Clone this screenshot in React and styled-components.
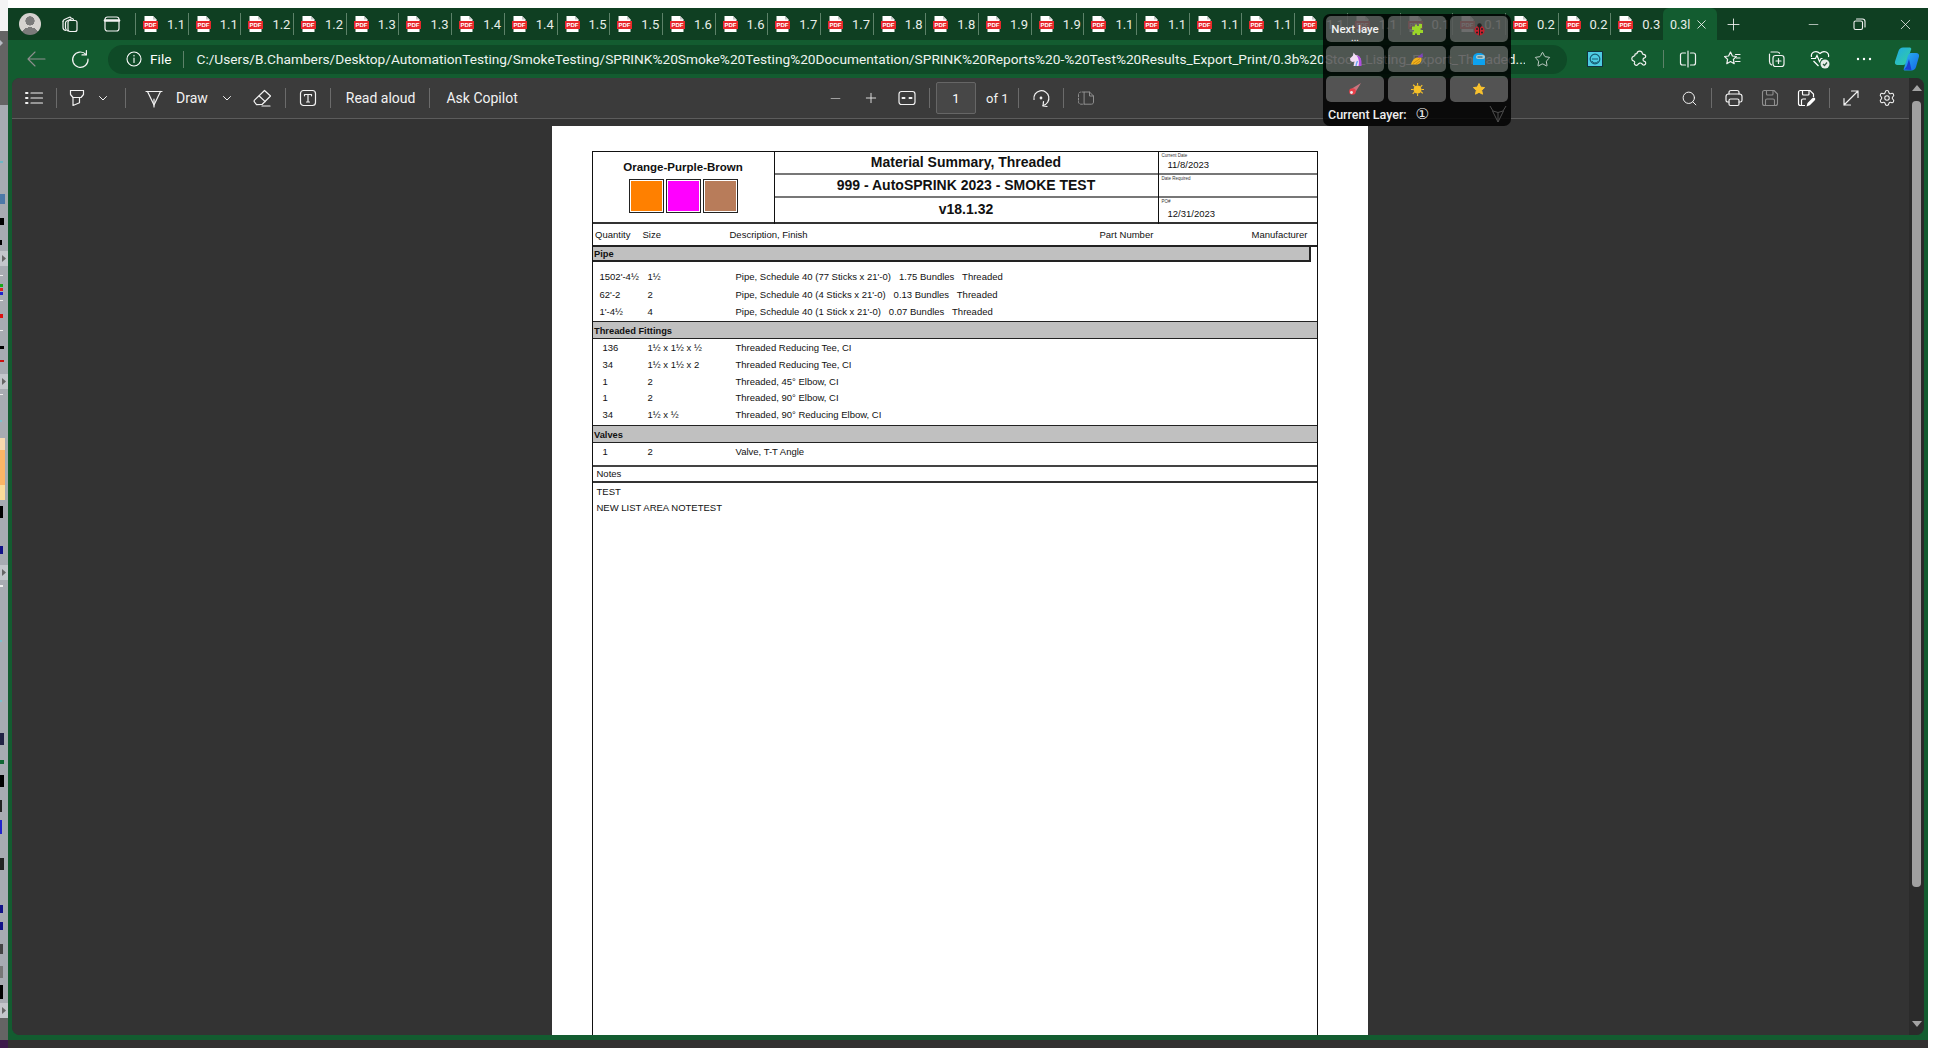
import styled, { createGlobalStyle } from "styled-components";
import { Settings, Star, Search, Minus, Plus, X } from "lucide-react";

const GlobalStyle = createGlobalStyle`
  html, body { margin: 0; padding: 0; background: #fff; overflow: hidden; }
  * { box-sizing: border-box; }
`;

const UI_FONT = `"Roboto", "Noto Sans", sans-serif`;
const DOC_FONT = `"Liberation Sans", Arial, sans-serif`;

const TABS = [
  "1.1", "1.1", "1.2", "1.2", "1.3", "1.3", "1.4", "1.4", "1.5", "1.5",
  "1.6", "1.6", "1.7", "1.7", "1.8", "1.8", "1.9", "1.9", "1.1", "1.1",
  "1.1", "1.1", "1.1", "1.1", "0.1", "0.1", "0.2", "0.2", "0.3",
];

const URL_TEXT =
  "C:/Users/B.Chambers/Desktop/AutomationTesting/SmokeTesting/SPRINK%20Smoke%20Testing%20Documentation/SPRINK%20Reports%20-%20Test%20Results_Export_Print/0.3b%20Stock_Listing_Export_Threaded...";

const PIPE = [
  ["1502'-4½", "1½", "Pipe, Schedule 40 (77 Sticks x 21'-0)   1.75 Bundles   Threaded"],
  ["62'-2", "2", "Pipe, Schedule 40 (4 Sticks x 21'-0)   0.13 Bundles   Threaded"],
  ["1'-4½", "4", "Pipe, Schedule 40 (1 Stick x 21'-0)   0.07 Bundles   Threaded"],
];

const FITTINGS = [
  ["136", "1½ x 1½ x ½", "Threaded Reducing Tee, CI"],
  ["34", "1½ x 1½ x 2", "Threaded Reducing Tee, CI"],
  ["1", "2", "Threaded, 45° Elbow, CI"],
  ["1", "2", "Threaded, 90° Elbow, CI"],
  ["34", "1½ x ½", "Threaded, 90° Reducing Elbow, CI"],
];

const SLIVER_MARKS = [
  [0, 161, 3, 2, "#6fb6c4"], [0, 194, 5, 10, "#4d79a8"], [0, 218, 4, 7, "#000"],
  [0, 240, 2, 5, "#000"], [0, 275, 3, 1, "#eee"], [0, 284, 3, 3, "#19a81c"],
  [0, 288, 3, 3, "#d22"], [0, 292, 3, 3, "#22c"], [0, 300, 3, 1, "#eee"],
  [0, 314, 3, 4, "#d11"], [0, 330, 3, 1, "#eee"], [0, 346, 4, 3, "#000"],
  [0, 360, 4, 2, "#c11"], [0, 394, 3, 1, "#eee"], [0, 420, 2, 2, "#7fc0cc"],
  [0, 506, 3, 12, "#000"], [0, 546, 3, 8, "#118"], [0, 585, 3, 2, "#eee"],
  [0, 640, 2, 2, "#7fc0cc"], [0, 700, 2, 2, "#7fc0cc"], [0, 733, 4, 12, "#224"],
  [0, 760, 4, 4, "#163"], [0, 775, 4, 12, "#000"], [0, 800, 2, 12, "#222"],
  [0, 820, 2, 14, "#22c"], [0, 858, 4, 12, "#222"], [0, 905, 3, 8, "#118"],
  [0, 922, 3, 8, "#118"], [0, 944, 3, 10, "#444"], [0, 966, 3, 12, "#777"],
  [0, 985, 3, 14, "#000"],
];

const SLIVER_HANDLES = [251, 374, 565, 1003];

export default function App() {
  return (
    <Screen>
      <GlobalStyle />
      <Upper>
        <Sliver />
        <Win>
          <TabBar>
            <AvatarSlot>
              <Avatar />
            </AvatarSlot>
            <Slot $w={36}><WorkspacesIcon /></Slot>
            <Slot $w={47}><TabActionsIcon /></Slot>
            {TABS.map((title, i) => (
              <Tab key={i}>
                <PdfIcon />
                <TabTitle>{title}</TabTitle>
              </Tab>
            ))}
            <ActiveTab>
              <ActiveTitle>0.3l</ActiveTitle>
              <X size={15} strokeWidth={1.3} />
            </ActiveTab>
            <Slot $w={34}><Plus size={19} strokeWidth={1.1} /></Slot>
            <Spacer />
            <Slot $w={46}><Minus size={15} strokeWidth={1.1} /></Slot>
            <Slot $w={46}><RestoreIcon /></Slot>
            <Slot $w={46}><X size={17} strokeWidth={1.1} /></Slot>
          </TabBar>

          <NavBar>
            <Slot $w={56} $dim><BackIcon /></Slot>
            <Slot $w={32}><RefreshIcon /></Slot>
            <AddressPill>
              <InfoIcon />
              <FileLabel>File</FileLabel>
              <PillDivider />
              <UrlText>{URL_TEXT}</UrlText>
              <Slot $w={34}><Star size={17} strokeWidth={1.1} /></Slot>
            </AddressPill>
            <Slot $w={44} $ml={6}><ExtensionIcon /></Slot>
            <Slot $w={44}><PuzzleIcon /></Slot>
            <NavDivider />
            <Slot $w={44}><SplitIcon /></Slot>
            <Slot $w={44}><FavoritesIcon /></Slot>
            <Slot $w={44}><CollectionsIcon /></Slot>
            <Slot $w={44}><HealthIcon /></Slot>
            <Slot $w={44}><DotsIcon /></Slot>
            <Slot $w={42}><CopilotIcon /></Slot>
          </NavBar>

          <Viewer>
            <ViewerMain>
              <Toolbar>
                <LeftTools>
                  <Slot $w={44}><ListIcon /></Slot>
                  <ToolSep />
                  <Slot $w={40}><HighlightIcon /></Slot>
                  <Slot $w={12}><ChevronIcon /></Slot>
                  <ToolSep $ml={16} />
                  <Slot $w={44} $ml={6}><DrawIcon /></Slot>
                  <ToolText>Draw</ToolText>
                  <Slot $w={12} $ml={13}><ChevronIcon /></Slot>
                  <Slot $w={44} $ml={8}><EraserIcon /></Slot>
                  <ToolSep />
                  <Slot $w={44}><TextBoxIcon /></Slot>
                  <ToolSep />
                  <ToolText $ml={15}>Read aloud</ToolText>
                  <ToolSep $ml={14} />
                  <ToolText $ml={16}>Ask Copilot</ToolText>
                </LeftTools>
                <CenterTools>
                  <Slot $w={36} $ml={12} $soft><Minus size={15} strokeWidth={1.3} /></Slot>
                  <Slot $w={35}><Plus size={16} strokeWidth={1.3} /></Slot>
                  <Slot $w={38}><FitIcon /></Slot>
                  <ToolSep $ml={3} />
                  <PageBox>1</PageBox>
                  <OfText>of 1</OfText>
                  <ToolSep />
                  <Slot $w={44}><RotateIcon /></Slot>
                  <ToolSep />
                  <Slot $w={44} $dim><TwoPageIcon /></Slot>
                </CenterTools>
                <RightTools>
                  <Slot $w={44}><Search size={17} strokeWidth={1.4} /></Slot>
                  <ToolSep />
                  <Slot $w={44}><PrintIcon /></Slot>
                  <Slot $w={27} $dim><SaveIcon /></Slot>
                  <Slot $w={46}><SaveAsIcon /></Slot>
                  <ToolSep />
                  <Slot $w={42}><ExpandIcon /></Slot>
                  <Slot $w={30}><Settings size={18} strokeWidth={1.4} /></Slot>
                </RightTools>
              </Toolbar>

              <Canvas>
                <Page>
                  <Sheet>
                    <Header>
                      <ColorCell>
                        <ColorName>Orange-Purple-Brown</ColorName>
                        <Swatches>
                          <Swatch $c="#ff8000" />
                          <Swatch $c="#ff00ff" />
                          <Swatch $c="#b87c5a" />
                        </Swatches>
                      </ColorCell>
                      <TitleCell>
                        <TitleRow $h={23}>Material Summary, Threaded</TitleRow>
                        <TitleRow $h={23}>999 - AutoSPRINK 2023 - SMOKE TEST</TitleRow>
                        <TitleRow $h={26} $last>v18.1.32</TitleRow>
                      </TitleCell>
                      <DateCell>
                        <DateRow $h={23}>
                          <DateLabel>Current Date</DateLabel>
                          <DateValue $top={1}>11/8/2023</DateValue>
                        </DateRow>
                        <DateRow $h={23}>
                          <DateLabel>Date Required</DateLabel>
                        </DateRow>
                        <DateRow $h={26} $last>
                          <DateLabel>PO#</DateLabel>
                          <DateValue $top={4}>12/31/2023</DateValue>
                        </DateRow>
                      </DateCell>
                    </Header>

                    <ColumnHead>
                      <span>Quantity</span>
                      <span>Size</span>
                      <span>Description, Finish</span>
                      <span>Part Number</span>
                      <span>Manufacturer</span>
                    </ColumnHead>

                    <PipeBand>Pipe</PipeBand>
                    <RowGroup $top={6} $bottom={1}>
                      {PIPE.map((r) => (
                        <ItemRow key={r[0]} $h={17.4}>
                          <span>{r[0]}</span>
                          <span>{r[1]}</span>
                          <Desc>{r[2]}</Desc>
                        </ItemRow>
                      ))}
                    </RowGroup>

                    <Band $h={18}>Threaded Fittings</Band>
                    <RowGroup $bottom={2}>
                      {FITTINGS.map((r, i) => (
                        <ItemRow key={i} $h={16.8} $indent={3}>
                          <span>{r[0]}</span>
                          <span>{r[1]}</span>
                          <Desc>{r[2]}</Desc>
                        </ItemRow>
                      ))}
                    </RowGroup>

                    <Band $h={18}>Valves</Band>
                    <RowGroup $bottom={5}>
                      <ItemRow $h={16.8} $indent={3}>
                        <span>1</span>
                        <span>2</span>
                        <Desc>Valve, T-T Angle</Desc>
                      </ItemRow>
                    </RowGroup>

                    <NotesHead>Notes</NotesHead>
                    <NotesBody>
                      <div>TEST</div>
                      <div>NEW LIST AREA NOTETEST</div>
                    </NotesBody>
                  </Sheet>
                </Page>
              </Canvas>
            </ViewerMain>
            <Scrollbar>
              <ArrowUp />
              <Thumb />
              <ArrowDown />
            </Scrollbar>
          </Viewer>
        </Win>
        <RightGap />
      </Upper>
      <BottomStrip>
        <BottomCorner />
      </BottomStrip>

      <LayerPanel>
        <LayerGrid>
          <LayerCell>
            <NextLabel>Next laye</NextLabel>
            <NextDots>...</NextDots>
          </LayerCell>
          <LayerCell><PuzzlePiece /></LayerCell>
          <LayerCell><Ladybug /></LayerCell>
          <LayerCell><Unicorn /></LayerCell>
          <LayerCell><Wing /></LayerCell>
          <LayerCell><Crewmate /></LayerCell>
          <LayerCell><Meteor /></LayerCell>
          <LayerCell><Sun /></LayerCell>
          <LayerCell><GoldStar /></LayerCell>
        </LayerGrid>
        <LayerFooter>
          <span>Current Layer:</span>
          <LayerNumber>①</LayerNumber>
          <DeerIcon />
        </LayerFooter>
      </LayerPanel>
    </Screen>
  );
}

/* ---------- drawings ---------- */

function Sliver() {
  return (
    <SliverBox>
      <svg width="8" height="1040" viewBox="0 0 8 1040">
        <rect x="0" y="0" width="8" height="31" fill="#f4f4f4" />
        <rect x="0" y="31" width="8" height="74" fill="#646464" />
        <path d="M0 40l3 3-3 3z" fill="#b7bcc4" />
        <rect x="0" y="105" width="8" height="910" fill="#a7abb2" />
        <rect x="0" y="1015" width="8" height="25" fill="#646464" />
        <rect x="0" y="438" width="5" height="62" fill="#fbb566" />
        <rect x="0" y="438" width="5" height="12" fill="#f8d9ae" />
        <rect x="0" y="485" width="5" height="15" fill="#fbdc9a" />
        {SLIVER_MARKS.map((m, i) => (
          <rect key={i} x={m[0]} y={m[1]} width={m[2]} height={m[3]} fill={m[4]} />
        ))}
        {SLIVER_HANDLES.map((y) => (
          <g key={y}>
            <rect x="0" y={y} width="8" height="15" fill="#c3c6cb" />
            <path d={`M2 ${y + 4}l4 3.5-4 3.5z`} fill="#666" />
          </g>
        ))}
      </svg>
    </SliverBox>
  );
}

function Line({ w = 20, h = 20, children, sw = 1.2 }) {
  return (
    <svg
      width={w}
      height={h}
      viewBox={`0 0 ${w} ${h}`}
      fill="none"
      stroke="currentColor"
      strokeWidth={sw}
      strokeLinecap="round"
      strokeLinejoin="round"
    >
      {children}
    </svg>
  );
}

const WorkspacesIcon = () => (
  <Line>
    <path d="M3 7.5c0-1 .6-1.6 1.4-2l5-2.3c.7-.3 1.2 0 1.6.6" />
    <path d="M5.5 9c0-1 .5-1.6 1.3-2l5-2.2c.8-.3 1.4 0 1.6.7" />
    <path d="M3 7.5v6c0 1.5.8 2.5 2.5 3" />
    <rect x="8" y="6.5" width="9" height="11" rx="2" />
    <path d="M5.5 9v5c0 1.4.8 2.4 2.5 3" />
  </Line>
);

const TabActionsIcon = () => (
  <Line>
    <rect x="3" y="3" width="14" height="14" rx="2.5" />
    <path d="M3 6.5h14" strokeWidth="2.6" />
  </Line>
);

const RestoreIcon = () => (
  <Line w={16} h={16} sw={1.1}>
    <rect x="3" y="5" width="8.5" height="8.5" rx="1.6" />
    <path d="M5.5 3h6c1.6 0 2.5 1 2.5 2.5V11" />
  </Line>
);

const BackIcon = () => (
  <Line w={22} h={20} sw={1.1}>
    <path d="M20 10H3M10 3l-7 7 7 7" />
  </Line>
);

const RefreshIcon = () => (
  <Line sw={1.2}>
    <path d="M16 5.5A7.7 7.7 0 1 0 18 10" />
    <path d="M16.4 1.5v4.4H12" />
  </Line>
);

const InfoIcon = () => (
  <InfoWrap>
    <Line w={16} h={16} sw={1.1}>
      <circle cx="8" cy="8" r="7" />
      <path d="M8 7v4.4M8 4.4v.5" />
    </Line>
  </InfoWrap>
);

const ExtensionIcon = () => (
  <svg width="16" height="16" viewBox="0 0 16 16">
    <rect x="0.5" y="0.5" width="15" height="15" fill="#4ecbe2" stroke="#10343e" />
    <circle cx="8" cy="8" r="4.8" fill="none" stroke="#175b72" strokeWidth="1.2" />
    <path d="M5 8h6M10.8 10.5A3.4 3.4 0 0 1 5 10" fill="none" stroke="#175b72" />
  </svg>
);

const PuzzleIcon = () => (
  <Line>
    <path d="M8 4.3c.4-3 5-3 5.3 0 0 .7.5 1 1.2 1 1.4 0 2.2.8 2.2 2.1 0 .9-.5 1.3-1.2 1.5-2 .4-2 3.2 0 3.5.8.2 1.2.7 1.2 1.5 0 1.3-1 2.3-2.3 2.1-.9-.1-1.1-.8-1.5-1.3-1.3-1.4-3.4-.4-4 .8-.5 1-2 1-2.9.3-.8-.6-.8-1.6-.4-2.2.3-.6-.1-1.2-.7-1.4-2.8-.8-2.8-4.2-.1-5 .9-.3 1.3-.9 1.2-1.6C5.8 4.4 7.3 5.2 8 4.3Z" />
  </Line>
);

const SplitIcon = () => (
  <Line>
    <path d="M10 2v16" />
    <path d="M7.5 4H4.5C3.3 4 2.5 4.8 2.5 6v8c0 1.2.8 2 2 2h3M12.5 4h3c1.2 0 2 .8 2 2v8c0 1.2-.8 2-2 2h-3" />
  </Line>
);

const FavoritesIcon = () => (
  <Line>
    <path d="M8.5 3l1.9 4 4 .5-3 2.9.8 4.3-3.7-2.1-3.7 2.1.8-4.3-3-2.9 4-.5z" />
    <path d="M13.5 5.5H18M14.5 9H18M13.5 12.5H18" />
  </Line>
);

const CollectionsIcon = () => (
  <Line>
    <path d="M5 3h6.5c1 0 1.6.5 2 1.3M3.5 5v7.5c0 1.5.7 2.8 2 3.4" />
    <rect x="7" y="6.5" width="11" height="11" rx="2.5" />
    <path d="M12.5 9.5v5M10 12h5" />
  </Line>
);

const HealthIcon = () => (
  <svg width="22" height="22" viewBox="0 0 22 22" fill="none" stroke="#fff" strokeWidth="1.2">
    <path d="M2.5 9C1.5 4.5 7 1.5 11 5.5 15 1.5 20.5 4.5 19.5 9" />
    <path d="M2 10.5h4.5l1.5-3 2.5 6 1.5-3h1.5" />
    <path d="M4.5 13l5 5" />
    <circle cx="16" cy="16" r="4.5" fill="#e8efe9" stroke="none" />
    <path d="M14 16l1.5 1.5 2.5-3" stroke="#2c5c3f" />
  </svg>
);

const DotsIcon = () => (
  <svg width="16" height="4" viewBox="0 0 16 4" fill="#fff">
    <circle cx="2" cy="2" r="1.2" />
    <circle cx="8" cy="2" r="1.2" />
    <circle cx="14" cy="2" r="1.2" />
  </svg>
);

const CopilotIcon = () => (
  <svg width="26" height="26" viewBox="0 0 26 26">
    <defs>
      <linearGradient id="copA" x1="0" y1="0" x2="1" y2="1">
        <stop offset="0" stopColor="#1fa9e8" />
        <stop offset="1" stopColor="#35d29a" />
      </linearGradient>
      <linearGradient id="copB" x1="0" y1="0" x2="1" y2="1">
        <stop offset="0" stopColor="#29b6f0" />
        <stop offset="1" stopColor="#1666e8" />
      </linearGradient>
    </defs>
    <path d="M9 1.5h6.5c1 0 1.5.5 1.8 1.5L13 15.5c-.6 2-2 3.5-4 3.5H3.5C1.5 19 .5 17.5 1 15.5L4.5 5C5.3 2.8 6.8 1.5 9 1.5Z" fill="url(#copA)" />
    <path d="M17 7h5c2.2 0 3.5 1.5 3 3.5L22 21c-.7 2.3-2.3 3.5-4.5 3.5H11c-1 0-1.5-.6-1.3-1.5L13.5 11c.6-2 1.7-4 3.5-4Z" fill="url(#copB)" />
    <path d="M9.5 23.5c2-1 3-2.5 3.8-5l1.7-5.5 2.5 11z" fill="#1b3fd0" />
  </svg>
);

const ListIcon = () => (
  <Line w={20} h={14}>
    <path d="M7 2h11.5M7 7h11.5M7 12h11.5" />
    <path d="M2 2h1.5M2 7h1.5M2 12h1.5" strokeWidth="2" />
  </Line>
);

const HighlightIcon = () => (
  <Line w={16} h={18}>
    <path d="M1.5 1.5h13" />
    <path d="M1.5 1.5v4L4 8.5h8l2.5-3v-4" />
    <path d="M4 8.5v8l6.5-2.8V8.5" />
  </Line>
);

const ChevronIcon = () => (
  <Line w={10} h={10} sw={1}>
    <path d="M1.5 3.5L5 7l3.5-3.5" />
  </Line>
);

const DrawIcon = () => (
  <Line w={18} h={20}>
    <path d="M1 3.5h16" />
    <path d="M2.5 3.5L9 17l6.5-13.5" />
    <path d="M9 11v8" />
  </Line>
);

const EraserIcon = () => (
  <Line>
    <path d="M11.5 2.5l6 5.5-8.5 8.5-5.5.1L1.5 14c-.5-.6-.5-1.3 0-1.8z" />
    <path d="M6.2 8l6 5.6" />
    <path d="M9 18h8" />
  </Line>
);

const TextBoxIcon = () => (
  <Line w={18} h={18}>
    <rect x="1.5" y="1.5" width="15" height="15" rx="3" />
    <path d="M5.5 5.5h7M5.5 5.5v1.3M12.5 5.5v1.3M9 5.5v7.5M7.5 13h3" />
  </Line>
);

const FitIcon = () => (
  <Line w={18} h={16}>
    <rect x="1" y="1.5" width="16" height="13" rx="2.5" />
    <path d="M4.5 8h2M11.5 8h2" strokeWidth="2" />
  </Line>
);

const RotateIcon = () => (
  <Line>
    <path d="M3 11.5A7.5 7.5 0 1 1 12 17.5" />
    <path d="M12.5 13.5L12 18l4 .5" />
    <circle cx="10" cy="10" r="0.8" />
  </Line>
);

const TwoPageIcon = () => (
  <Line w={18} h={16} sw={1}>
    <path d="M7 2H4C2.5 2 1.5 3 1.5 4.5V12c0 1.3 1 2.2 2.5 2.2h3" strokeDasharray="2 1.5" />
    <path d="M7.5 2h5l4 4v6c0 1.4-.8 2.2-2.2 2.2H7.5zM12.5 2v4h4" />
  </Line>
);

const PrintIcon = () => (
  <Line>
    <path d="M5 6V4.5C5 3.3 5.8 2.5 7 2.5h6c1.2 0 2 .8 2 2V6" />
    <path d="M5 14H3.8c-.9 0-1.8-.8-1.8-1.8V8.5C2 7 3 6 4.5 6h11C17 6 18 7 18 8.5v3.7c0 1-.9 1.8-1.8 1.8H15" />
    <rect x="5" y="11" width="10" height="6.5" rx="1.5" />
  </Line>
);

const SaveIcon = () => (
  <Line sw={1.1}>
    <path d="M2.5 4.5c0-1.2.8-2 2-2H14l3.5 3.5v9.5c0 1.2-.8 2-2 2h-11c-1.2 0-2-.8-2-2z" />
    <path d="M6.5 2.5V6c0 .5.4 1 1 1H12c.6 0 1-.5 1-1V2.5M5.5 17.5v-5c0-.8.5-1.5 1.5-1.5h6c1 0 1.5.7 1.5 1.5v5" />
  </Line>
);

const SaveAsIcon = () => (
  <svg width="20" height="20" viewBox="0 0 20 20" fill="none" stroke="#fff" strokeWidth="1.2">
    <path d="M9 17.5H4.5c-1.2 0-2-.8-2-2v-11c0-1.2.8-2 2-2H14l3.5 3.5v3" />
    <path d="M6.5 2.5V6c0 .5.4 1 1 1H12c.6 0 1-.5 1-1V2.5M5.5 17.5v-5c0-.8.5-1.5 1.5-1.5h3" />
    <path d="M10.5 18.5l1-3.5 5-5c.8-.7 1.7-.7 2.3 0 .6.7.6 1.5 0 2.2l-5 5z" fill="#fff" stroke="none" />
  </svg>
);

const ExpandIcon = () => (
  <Line>
    <path d="M3 17L17 3M10.5 3H17v6.5M3 10.5V17h6.5" />
  </Line>
);

const PdfIcon = () => (
  <svg width="15" height="16" viewBox="0 0 15 16">
    <path d="M1.5 0H10l3.5 3.5V16h-12z" fill="#fff" />
    <path d="M10 0v3.5h3.5z" fill="#c9c9c9" />
    <rect x="0" y="5" width="15" height="8" fill="#e8282b" />
    <text x="7.5" y="11.2" textAnchor="middle" fontFamily={DOC_FONT} fontSize="6" fontWeight="700" fill="#fff">
      PDF
    </text>
  </svg>
);

const PuzzlePiece = () => (
  <svg width="13" height="13" viewBox="0 0 13 13" fill="#9bd629">
    <path d="M4 1.5h2V3h2V1h3v4l-1.5.5V7H12v3H9v2H6v-1.5H4V12H1.5V8.5H3V7H1V3.5h3z" />
  </svg>
);

const Ladybug = () => (
  <svg width="13" height="13" viewBox="0 0 13 13">
    <ellipse cx="6.5" cy="7.5" rx="5" ry="5" fill="#c71f2d" />
    <circle cx="6.5" cy="2.5" r="2.2" fill="#222" />
    <path d="M6.5 3v9.5" stroke="#222" />
    <g fill="#222">
      <circle cx="4" cy="6" r="1" />
      <circle cx="9" cy="6" r="1" />
      <circle cx="4" cy="9.5" r="1" />
      <circle cx="9" cy="9.5" r="1" />
    </g>
  </svg>
);

const Unicorn = () => (
  <svg width="15" height="15" viewBox="0 0 15 15">
    <path d="M2 6.5l3-3 .5-3 2 2.5c3.5 0 5.500 3 5.500 7v4H5.500l1-4.500-2 .5-2-1z" fill="#f2dcf5" />
    <path d="M8.5 3.2c3 .5 5 3 5 6.800v4h-3c1-3.500.5-7.500-2-10.800z" fill="#b04fe0" />
    <path d="M8 14c.2-2 .8-3.5 1.5-5" stroke="#6aa7f0" strokeWidth="1.4" fill="none" />
  </svg>
);

const Wing = () => (
  <svg width="15" height="14" viewBox="0 0 15 14">
    <path d="M1 12.5C2 7.5 6 4 11 5.5 12.5 8 11 11.5 7.5 12.5z" fill="#f2b21b" />
    <path d="M7 5.5L12.5 1l.5 4-2 .5z" fill="#7d43b8" />
    <path d="M3 11.5l7-5M6 12l4-3" stroke="#b67a10" strokeWidth="0.7" />
  </svg>
);

const Crewmate = () => (
  <svg width="14" height="14" viewBox="0 0 14 14">
    <path d="M1 13V6c0-3.2 2.4-5 6-5s6 1.8 6 5v7z" fill="#0da2ee" />
    <rect x="4" y="3" width="9" height="4" rx="2" fill="#a9cbd1" />
    <path d="M5.5 5h5" stroke="#2a5563" />
  </svg>
);

const Meteor = () => (
  <svg width="14" height="14" viewBox="0 0 14 14">
    <path d="M13 1L4 6.5 7.5 10z" fill="#c9757e" />
    <circle cx="4.5" cy="9.5" r="3.3" fill="#e8404a" />
    <circle cx="3.5" cy="10.5" r="1.4" fill="#ececec" />
  </svg>
);

const Sun = () => (
  <svg width="13" height="13" viewBox="0 0 15 15" fill="#f6c028">
    <circle cx="7.5" cy="7.5" r="4.5" />
    <path d="M7 0h1.2v3H7zM7 12h1.2v3H7zM0 7h3v1.2H0zM12 7h3v1.2h-3zM2 2.5l1-1 2 2-1 1zM11 10.5l1-1 2 2-1 1zM1.5 12l2-2 1 1-2 2zM10.5 4l2-2 1 1-2 2z" />
  </svg>
);

const GoldStar = () => (
  <svg width="14" height="14" viewBox="0 0 14 14" fill="#f9c22e" stroke="#f9c22e" strokeLinejoin="round">
    <path d="M7 1.5l1.7 3.6 3.9.5-2.9 2.7.8 3.9L7 10.3l-3.5 1.900.8-3.900-2.900-2.700 3.900-.5z" />
  </svg>
);

const DeerIcon = () => (
  <DeerWrap>
    <svg width="18" height="18" viewBox="0 0 18 18" fill="none" stroke="#4d4d4d" strokeWidth="1">
      <path d="M1 1l3 5 5 1.5L14 6l3-5" />
      <path d="M3.5 6L9 17l5.5-11" />
      <path d="M9 8v9" />
    </svg>
  </DeerWrap>
);

/* ---------- layout ---------- */

const Screen = styled.div`
  position: relative;
  width: 1936px;
  height: 1048px;
  display: flex;
  flex-direction: column;
  background: #fff;
  overflow: hidden;
  font-family: ${UI_FONT};
`;

const Upper = styled.div`
  display: flex;
  height: 1040px;
`;

const SliverBox = styled.div`
  flex: 0 0 8px;
  line-height: 0;
`;

const Win = styled.div`
  flex: 0 0 1920px;
  min-width: 0;
  margin-top: 8px;
  display: flex;
  flex-direction: column;
  background: #135c30;
  color: #fff;
`;

const RightGap = styled.div`
  flex: 1;
  background: #fff;
`;

const BottomStrip = styled.div`
  height: 8px;
  width: 1928px;
  background: #333131;
`;

const BottomCorner = styled.div`
  width: 8px;
  height: 8px;
  background: #3c1a4a;
`;

const TabBar = styled.div`
  height: 32px;
  display: flex;
  align-items: center;
  background: #0f3f22;
`;

const Slot = styled.div`
  flex: 0 0 ${(p) => p.$w}px;
  height: 100%;
  margin-left: ${(p) => p.$ml || 0}px;
  display: flex;
  align-items: center;
  justify-content: center;
  color: ${(p) => (p.$dim ? "#8f8f8f" : p.$soft ? "#b8b8b8" : "#f2f2f2")};
`;

const AvatarSlot = styled.div`
  flex: 0 0 44px;
  display: flex;
  justify-content: center;
`;

const Avatar = styled.div`
  width: 22px;
  height: 22px;
  border-radius: 50%;
  background:
    radial-gradient(circle at 50% 36%, #7b7b7b 0 4.4px, transparent 4.8px),
    radial-gradient(ellipse 8px 6px at 50% 92%, #7b7b7b 0 100%, transparent 100%),
    #d6d3d0;
`;

const Tab = styled.div`
  flex: 0 0 52.7px;
  height: 22px;
  display: flex;
  align-items: center;
  padding-left: 7px;
  border-left: 1px solid #5d8269;
  overflow: hidden;
`;

const TabTitle = styled.span`
  margin-left: 9px;
  font-size: 13px;
  color: #e7eee9;
  white-space: nowrap;
`;

const ActiveTab = styled.div`
  flex: 0 0 54px;
  height: 32px;
  display: flex;
  align-items: center;
  padding-left: 7px;
  gap: 4px;
  background: #135c30;
  border-radius: 6px 6px 0 0;
`;

const ActiveTitle = styled.span`
  flex: 0 0 20px;
  font-size: 12.5px;
  color: #e7eee9;
  white-space: nowrap;
`;

const Spacer = styled.div`
  flex: 1;
`;

const NavBar = styled.div`
  height: 38px;
  display: flex;
  align-items: center;
  background: #135c30;
`;

const AddressPill = styled.div`
  flex: 0 0 1459px;
  width: 1459px;
  min-width: 0;
  margin-left: 12px;
  height: 29px;
  display: flex;
  align-items: center;
  padding: 0 8px 0 18px;
  background: #0f4a27;
  border-radius: 15px;
  font-size: 13.7px;
`;

const InfoWrap = styled.div`
  display: flex;
`;

const FileLabel = styled.span`
  margin-left: 8px;
`;

const PillDivider = styled.div`
  width: 1px;
  height: 17px;
  margin: 0 12px;
  background: #5d8269;
`;

const UrlText = styled.div`
  flex: 1 1 0;
  width: 0;
  min-width: 0;
  white-space: nowrap;
  overflow: hidden;
  color: #eef3ef;
  padding-right: 8px;
`;

const NavDivider = styled.div`
  flex: 0 0 1px;
  height: 18px;
  margin: 0 2px;
  background: #5d8269;
`;

const Viewer = styled.div`
  flex: 1;
  display: flex;
  margin: 0 4px 5px;
  min-height: 0;
  border-radius: 8px;
  overflow: hidden;
  background: #333;
`;

const ViewerMain = styled.div`
  flex: 1;
  min-width: 0;
  display: flex;
  flex-direction: column;
`;

const Toolbar = styled.div`
  flex: 0 0 41px;
  display: flex;
  align-items: center;
  background: #3b3b3b;
  border-bottom: 1px solid #5c5c5c;
`;

const LeftTools = styled.div`
  flex: 0 0 793px;
  height: 100%;
  display: flex;
  align-items: center;
`;

const CenterTools = styled.div`
  height: 100%;
  display: flex;
  align-items: center;
`;

const RightTools = styled.div`
  height: 100%;
  display: flex;
  align-items: center;
  margin-left: auto;
  padding-right: 7px;
`;

const ToolSep = styled.div`
  flex: 0 0 1px;
  height: 20px;
  margin-left: ${(p) => p.$ml || 0}px;
  background: #6b6b6b;
`;

const ToolText = styled.span`
  margin-left: ${(p) => p.$ml || 0}px;
  font-size: 14px;
  color: #f2f2f2;
  white-space: nowrap;
`;

const PageBox = styled.div`
  flex: 0 0 40px;
  height: 32px;
  margin-left: 6px;
  display: flex;
  align-items: center;
  justify-content: center;
  background: #474747;
  border: 1px solid #666;
  border-radius: 2px;
  font-size: 13px;
  color: #fff;
`;

const OfText = styled.span`
  flex: 0 0 42px;
  padding-left: 10px;
  font-size: 13px;
  color: #f2f2f2;
  white-space: nowrap;
`;

const Canvas = styled.div`
  flex: 1;
  min-height: 0;
  padding: 7px 2px 0 0;
  background: #333;
  overflow: hidden;
`;

const Page = styled.div`
  width: 816px;
  height: 1056px;
  margin: 0 auto;
  padding: 25px 50px 0 40px;
  background: #fff;
  color: #111;
  font-family: ${DOC_FONT};
`;

const Sheet = styled.div`
  width: 726px;
  height: 1030px;
  border: 1px solid #111;
  border-bottom: 0;
`;

const Header = styled.div`
  display: grid;
  grid-template-columns: 182px 384px 1fr;
  height: 72px;
  border-bottom: 2px solid #333;
`;

const ColorCell = styled.div`
  display: flex;
  flex-direction: column;
  align-items: center;
  padding-top: 8px;
  border-right: 1px solid #111;
`;

const ColorName = styled.div`
  font-size: 11.5px;
  font-weight: 700;
  line-height: 14px;
`;

const Swatches = styled.div`
  display: flex;
  gap: 2px;
  margin-top: 5px;
`;

const Swatch = styled.div`
  width: 35px;
  height: 34px;
  background: ${(p) => p.$c};
  border: 1px solid #222;
  box-shadow: inset 0 0 0 1px #fff;
`;

const TitleCell = styled.div`
  display: flex;
  flex-direction: column;
  border-right: 1px solid #111;
`;

const TitleRow = styled.div`
  height: ${(p) => p.$h}px;
  display: flex;
  align-items: center;
  justify-content: center;
  padding-bottom: ${(p) => (p.$last ? "4px" : "1px")};
  font-size: 14px;
  font-weight: 700;
  border-bottom: ${(p) => (p.$last ? "0" : "2px solid #777")};
`;

const DateCell = styled.div`
  display: flex;
  flex-direction: column;
`;

const DateRow = styled.div`
  height: ${(p) => p.$h}px;
  padding: 1px 0 0 3px;
  border-bottom: ${(p) => (p.$last ? "0" : "2px solid #777")};
`;

const DateLabel = styled.div`
  font-size: 4.5px;
  line-height: 5px;
  color: #333;
`;

const DateValue = styled.div`
  margin: ${(p) => p.$top || 0}px 0 0 6px;
  font-size: 9.5px;
  line-height: 11px;
`;

const ColumnHead = styled.div`
  display: grid;
  grid-template-columns: 47.5px 87px 370px 152px 1fr;
  height: 23px;
  padding-left: 2.5px;
  align-items: center;
  font-size: 9.5px;
  border-bottom: 2px solid #222;
`;

const Band = styled.div`
  height: ${(p) => p.$h}px;
  display: flex;
  align-items: center;
  padding: 1px 0 0 1.5px;
  background: #c0c0c0;
  font-size: 9.3px;
  font-weight: 700;
  border-top: 1px solid #222;
  border-bottom: 1px solid #222;
`;

const PipeBand = styled(Band)`
  height: 15px;
  margin-right: 6px;
  border-top: 0;
  border-right: 2px solid #222;
  border-bottom: 2px solid #222;
`;

const RowGroup = styled.div`
  padding-top: ${(p) => p.$top || 0}px;
  padding-bottom: ${(p) => p.$bottom || 0}px;
`;

const ItemRow = styled.div`
  display: grid;
  grid-template-columns: 48px 88px 1fr;
  height: ${(p) => p.$h}px;
  padding-left: 7px;
  align-items: center;
  font-size: 9.5px;
  color: #111;

  & > span:first-child {
    padding-left: ${(p) => p.$indent || 0}px;
  }
`;

const Desc = styled.span`
  white-space: pre;
`;

const NotesHead = styled.div`
  height: 18px;
  display: flex;
  align-items: center;
  padding-left: 4px;
  font-size: 9.5px;
  border-top: 2px solid #444;
  border-bottom: 2px solid #333;
`;

const NotesBody = styled.div`
  padding: 1px 0 0 4px;
  font-size: 9.5px;
  line-height: 16px;
`;

const Scrollbar = styled.div`
  flex: 0 0 15px;
  display: flex;
  flex-direction: column;
  align-items: center;
  background: #2b2b2b;
`;

const ArrowUp = styled.div`
  margin-top: 7px;
  width: 0;
  height: 0;
  border-left: 5px solid transparent;
  border-right: 5px solid transparent;
  border-bottom: 6px solid #a3a3a3;
`;

const Thumb = styled.div`
  margin-top: 10px;
  width: 9px;
  height: 786px;
  border-radius: 4px;
  background: #a0a0a0;
`;

const ArrowDown = styled.div`
  margin-top: auto;
  margin-bottom: 8px;
  width: 0;
  height: 0;
  border-left: 5px solid transparent;
  border-right: 5px solid transparent;
  border-top: 6px solid #a3a3a3;
`;

/* floats over the browser window */
const LayerPanel = styled.div`
  position: absolute;
  left: 1323px;
  top: 14px;
  width: 188px;
  height: 112px;
  padding: 2px 3px 0;
  background: rgba(0, 0, 0, 0.82);
  border-radius: 7px;
  color: #fff;
  font-family: ${UI_FONT};
`;

const LayerGrid = styled.div`
  display: grid;
  grid-template-columns: repeat(3, 58px);
  grid-auto-rows: 26px;
  gap: 4px;
`;

const LayerCell = styled.div`
  position: relative;
  display: flex;
  align-items: center;
  justify-content: center;
  background: rgba(255, 255, 255, 0.3);
  border-radius: 5px;
`;

const NextLabel = styled.span`
  font-size: 11.5px;
  font-weight: 500;
  color: #f2f2f2;
  white-space: nowrap;
`;

const NextDots = styled.span`
  position: absolute;
  left: 0;
  right: 0;
  bottom: 0;
  text-align: center;
  font-size: 10px;
  line-height: 8px;
`;

const LayerFooter = styled.div`
  position: relative;
  display: flex;
  align-items: center;
  gap: 9px;
  height: 24px;
  padding-left: 2px;
  font-size: 12.5px;
  font-weight: 500;
  color: #eee;
`;

const LayerNumber = styled.span`
  font-family: "DejaVu Sans", sans-serif;
  font-size: 15px;
  font-weight: 400;
`;

const DeerWrap = styled.div`
  position: absolute;
  right: 1px;
  top: 3px;
  line-height: 0;
`;
